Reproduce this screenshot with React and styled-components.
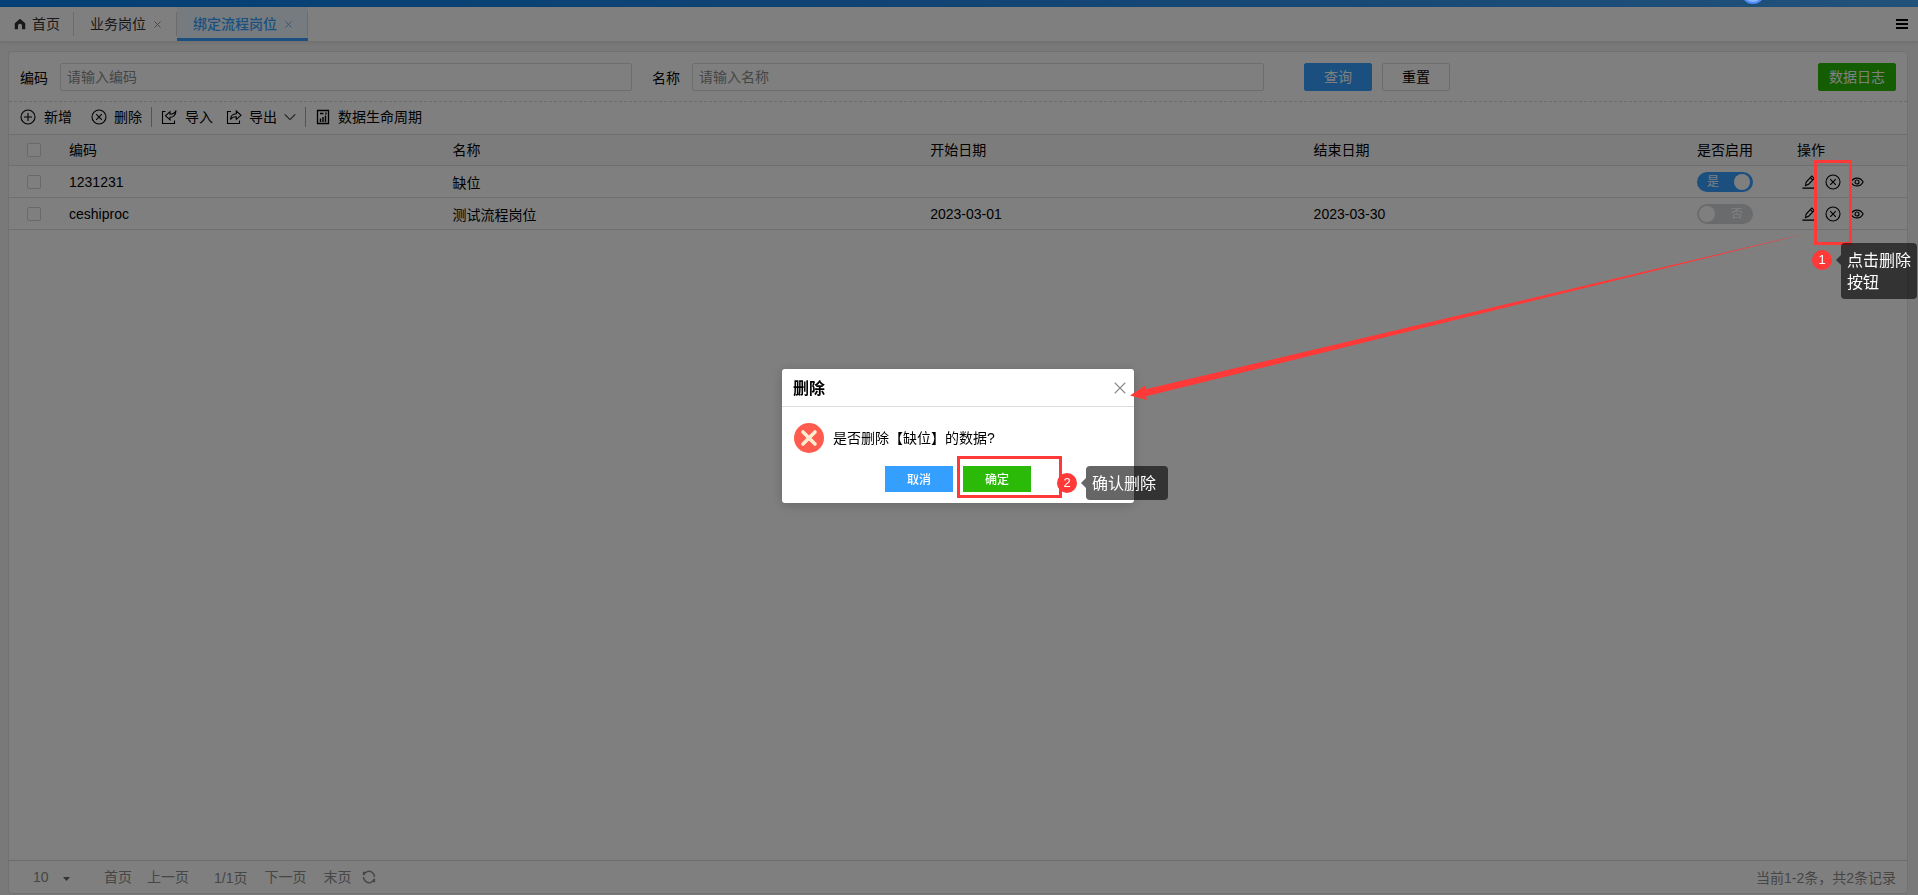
import React from "react";
import styled, { createGlobalStyle, css } from "styled-components";

const GlobalStyle = createGlobalStyle`
  * {
    box-sizing: border-box;
  }

  body {
    margin: 0;
    font-family: "Liberation Sans", "Noto Sans CJK SC", sans-serif;
    font-size: 14px;
    color: #000;
    background: #f2f2f2;
  }

  button, input, select {
    font-family: inherit;
    font-size: inherit;
    color: inherit;
    margin: 0;
  }
`;

const Page = styled.div`
  min-height: 100vh;
  display: flex;
  flex-direction: column;
`;

const TopBar = styled.div`
  height: 7px;
  background: linear-gradient(to right, #0880ea, #2488e8 50%, #44a4f4);
`;

const TabBar = styled.nav`
  height: 35px;
  display: flex;
  align-items: center;
  padding-left: 14px;
  background: #fff;
  border-bottom: 1px solid #e4e4e4;
  box-shadow: 0 1px 3px rgba(0, 0, 0, 0.08);
`;

const Tab = styled.div`
  height: 34px;
  display: flex;
  align-items: center;
  gap: 8px;
  padding: 0 16px;
  color: #333;
  position: relative;

  &:first-child {
    padding: 0 14px 0 0;
  }

  /* divider on the right edge of every tab */
  &::after {
    content: "";
    position: absolute;
    right: 0;
    top: 5px;
    width: 1px;
    height: 24px;
    background: #d8d8d8;
  }

  ${({ $active }) =>
    $active &&
    css`
      padding-top: 3px;
      color: #349fff;
      font-weight: 500;
      background: #ebf7ff;
      border-bottom: 3px solid #349fff;
    `}
`;

const TabLink = styled.a`
  display: flex;
  align-items: center;
  gap: 6px;
  line-height: 20px;
  color: inherit;
  text-decoration: none;
`;

const PlainButton = styled.button`
  display: inline-flex;
  align-items: center;
  gap: ${({ $gap }) => $gap || 0}px;
  padding: 0;
  border: 0;
  background: none;
  line-height: 20px;
  white-space: nowrap;
  cursor: pointer;
`;

const MenuButton = styled(PlainButton)`
  margin-left: auto;
  margin-right: 10px;
`;

const Panel = styled.main`
  flex: 1;
  display: flex;
  flex-direction: column;
  margin: 9px 10px 1px 8px;
  background: #fff;
  border: 1px solid #e2e2e2;
  border-radius: 4px;
`;

const SearchForm = styled.form`
  display: flex;
  align-items: center;
  padding: 11px 11px 10px;
  border-bottom: 1px dashed #d8d8d8;
`;

const Field = styled.label`
  flex: 1;
  display: flex;
  align-items: center;
  gap: 12px;
  margin-right: 20px;
  white-space: nowrap;
`;

const Input = styled.input`
  flex: 1;
  min-width: 0;
  height: 28px;
  padding: 0 6px 1px;
  border: 1px solid #d9dade;
  border-radius: 2px;
  background: #fff;

  &::placeholder {
    color: #8c8c8c;
  }
`;

const SearchActions = styled.div`
  flex: 0 0 612px;
  display: flex;
  gap: 10px;
  padding-left: 20px;
`;

const Button = styled.button`
  height: ${({ $small }) => ($small ? 26 : 28)}px;
  min-width: 68px;
  padding: 0 10px 2px;
  border: 1px solid ${({ $bg }) => $bg || "#d9d9d9"};
  border-radius: ${({ $small }) => ($small ? 0 : 2)}px;
  background: ${({ $bg }) => $bg || "#fff"};
  color: ${({ $bg }) => ($bg ? "#fff" : "#000")};
  font-size: ${({ $small }) => ($small ? 12 : 14)}px;
  font-weight: ${({ $small }) => ($small ? 500 : 400)};
  cursor: pointer;
`;

const LogButton = styled(Button)`
  margin-left: auto;
`;

const Toolbar = styled.div`
  height: 33px;
  display: flex;
  align-items: center;
  padding: 0 0 2px 11px;
  border-bottom: 1px solid #dedede;
`;

const ToolGroup = styled.div`
  display: flex;
  gap: ${({ $gap }) => $gap}px;
  padding-right: 9px;

  & + & {
    padding-left: 9px;
    border-left: 1px solid #a8a8a8;
  }
`;

const TableArea = styled.div`
  flex: 1;
`;

const Table = styled.table`
  width: 100%;
  table-layout: fixed;
  border-collapse: separate;
  border-spacing: 0;

  th, td {
    height: 32px;
    padding: 0 12px;
    border-bottom: 1px solid #dedede;
    text-align: left;
    font-weight: 400;
    white-space: nowrap;
  }

  th {
    height: 31px;
    padding-bottom: 2px;
    background: #f8f8f8;
  }

  th:first-child, td:first-child {
    padding: 0 0 0 18px;
  }
`;

const Col = styled.col`
  width: ${({ $width }) => $width || "auto"};
`;

const Checkbox = styled.input`
  appearance: none;
  display: block;
  width: 14px;
  height: 14px;
  margin: 0;
  border: 1px solid #d2d2d2;
  border-radius: 2px;
  background: #fff;
`;

const SwitchTrack = styled.label`
  display: flex;
  align-items: center;
  justify-content: space-between;
  flex-direction: ${({ $on }) => ($on ? "row" : "row-reverse")};
  width: 56px;
  height: 20px;
  margin-top: 1px;
  padding: ${({ $on }) => ($on ? "0 3px 0 10px" : "0 10px 0 2px")};
  border-radius: 10px;
  background: ${({ $on }) => ($on ? "#349fff" : "#d5d6da")};
  color: #fff;
  font-size: 12px;
  line-height: 20px;
`;

const SwitchInput = styled.input`
  appearance: none;
  width: 16px;
  height: 16px;
  margin: 0;
  border-radius: 50%;
  background: #fff;
`;

const RowActions = styled.div`
  display: flex;
  align-items: center;
  gap: 9px;
  padding-left: 5px;
`;

const Pager = styled.footer`
  height: 33px;
  display: flex;
  align-items: center;
  padding: 0 11px 1px 20px;
  border-top: 1px solid #d8d8d8;
  color: #8c8c8c;
`;

const PageSize = styled.label`
  display: flex;
  align-items: center;
  width: 60px;
  margin-right: 15px;

  select {
    appearance: none;
    width: 34px;
    padding: 0 0 0 4px;
    border: 0;
    background: none;
  }

  svg {
    pointer-events: none;
    margin-top: 5px;
  }
`;

const PagerLinks = styled.div`
  display: flex;
  align-items: center;
  gap: ${({ $gap }) => $gap}px;
  margin-right: ${({ $after }) => $after || 0}px;
`;

const Total = styled.span`
  margin-left: auto;
`;

const Mask = styled.div`
  position: fixed;
  inset: 0;
  display: flex;
  align-items: center;
  justify-content: center;
  padding: 0 2px 23px 0;
  background: rgba(0, 0, 0, 0.5);
`;

const Assistant = styled.svg`
  position: fixed;
  top: 0;
  right: 153px;
`;

const Dialog = styled.section`
  position: relative;
  width: 352px;
  background: #fff;
  border-radius: 3px;
  box-shadow: 0 2px 12px rgba(0, 0, 0, 0.2);
`;

const DialogHeader = styled.header`
  height: 38px;
  display: flex;
  align-items: center;
  justify-content: space-between;
  padding: 0 8px 0 11px;
  border-bottom: 1px solid #dcdde0;

  h2 {
    margin: 0;
    padding-bottom: 2px;
    font-size: 16px;
    font-weight: 700;
  }
`;

const DialogBody = styled.div`
  display: flex;
  align-items: center;
  gap: 9px;
  padding: 16px 12px 13px;

  p {
    margin: 0;
    line-height: 20px;
  }
`;

const DialogFooter = styled.footer`
  display: flex;
  gap: 10px;
  padding: 0 0 11px 103px;
`;

/* guide marks drawn over the page */
const Frame = styled.div`
  position: absolute;
  z-index: 2;
  top: ${({ $top }) => $top}px;
  left: ${({ $left }) => $left};
  right: ${({ $right }) => $right};
  width: ${({ $width }) => $width}px;
  height: ${({ $height }) => $height}px;
  border: 3px solid #ff3838;
  pointer-events: none;
`;

const Note = styled.div`
  position: absolute;
  z-index: 2;
  top: ${({ $top }) => $top}px;
  left: ${({ $left }) => $left};
  right: ${({ $right }) => $right};
  display: flex;
  align-items: flex-start;
  gap: 9px;
`;

const Badge = styled.span`
  width: 20px;
  height: 20px;
  margin-top: 7px;
  border-radius: 50%;
  background: #ff3838;
  color: #fff;
  font-size: 13px;
  line-height: 20px;
  text-align: center;
`;

const Tip = styled.span`
  position: relative;
  width: ${({ $width }) => $width}px;
  padding: 7px 6px 5px;
  border-radius: 4px;
  background: rgba(0, 0, 0, 0.6);
  color: #fff;
  font-size: 16px;
  line-height: 22px;

  &::before {
    content: "";
    position: absolute;
    left: -5px;
    top: 12px;
    border: 5px solid transparent;
    border-left: 0;
    border-right-color: rgba(0, 0, 0, 0.6);
  }
`;

const Arrow = styled.svg`
  position: absolute;
  z-index: 1;
  left: 348px;
  top: -136px;
  pointer-events: none;
`;

const Icon = ({ size = 16, children, ...rest }) => (
  <svg
    width={size}
    height={size}
    viewBox="0 0 16 16"
    fill="none"
    stroke="currentColor"
    strokeWidth="1.1"
    aria-hidden="true"
    {...rest}
  >
    {children}
  </svg>
);

const HomeIcon = () => (
  <Icon size={12}>
    <path d="M8 1 1 7v8h4.300v-4.500a2.700 2.700 0 0 1 5.400 0V15H15V7z" fill="currentColor" stroke="none" />
  </Icon>
);

const CloseIcon = ({ size = 7, color = "#888", weight = 2 }) => (
  <Icon size={size} stroke={color} strokeWidth={weight}>
    <path d="m1 1 14 14M15 1 1 15" />
  </Icon>
);

const PlusCircleIcon = () => (
  <Icon>
    <circle cx="8" cy="8" r="7" />
    <path d="M8 4v8M4 8h8" />
  </Icon>
);

const CrossCircleIcon = () => (
  <Icon>
    <circle cx="8" cy="8" r="7" />
    <path d="m5.200 5.200 5.600 5.600m0-5.600-5.600 5.600" />
  </Icon>
);

const ImportIcon = () => (
  <Icon>
    <path d="M4.500 2.500h-3v12h12v-3" />
    <path d="M15 1.500c-1 2.600-2.800 3.700-6 3.700V2.700L4.500 6.800 9 10.800V8.300c3.500 0 5.700-2.300 6-6.800z" />
  </Icon>
);

const ExportIcon = () => (
  <Icon>
    <path d="M5 2.500H1.500v12h12v-3" />
    <path d="M4.500 10.500c.3-4 2.500-5.600 5.800-5.700V2l4.700 4.300-4.700 4V7.800c-2.600 0-4.400.5-5.800 2.700z" />
  </Icon>
);

const ReportIcon = () => (
  <Icon>
    <path d="M2.500 1.500h11v13h-11z" strokeWidth="1.300" />
    <path d="M5.500 13V9.500M8 13V8M10.500 13V6.500M5 4.500h3.500M11 3.500v2" strokeWidth="1.400" />
  </Icon>
);

const ChevronIcon = () => (
  <Icon size={12} stroke="#333" strokeWidth="1.400">
    <path d="m1 4.500 7 7 7-7" />
  </Icon>
);

const EditIcon = () => (
  <Icon size={14} strokeWidth="1.300">
    <path d="M.5 15h15" strokeWidth="1.500" />
    <path d="m4 12 .8-4 6.400-6.700 2.800 2.600-6.400 6.600zM9.500 3l2.800 2.700" />
  </Icon>
);

const EyeIcon = () => (
  <Icon size={14} strokeWidth="1.300">
    <path d="M1 8C2.500 5 5 3.500 8 3.500S13.500 5 15 8c-1.500 3-4 4.500-7 4.500S2.500 11 1 8z" />
    <circle cx="8" cy="8" r="2.300" />
  </Icon>
);

const RefreshIcon = () => (
  <Icon size={14} strokeWidth="1.500">
    <path d="M5 2.200A6.400 6.400 0 0 1 14.300 8M11 13.800A6.400 6.400 0 0 1 1.700 8" />
    <path d="M1.700 6V2.700H5.500M14.300 10v3.300h-3.800M1.900 6l2-3M14.100 10l-2 3" />
  </Icon>
);

const rows = [
  { code: "1231231", name: "缺位", start: "", end: "", enabled: true },
  { code: "ceshiproc", name: "测试流程岗位", start: "2023-03-01", end: "2023-03-30", enabled: false },
];

const Switch = ({ on }) => (
  <SwitchTrack $on={on}>
    <span>{on ? "是" : "否"}</span>
    <SwitchInput type="checkbox" role="switch" defaultChecked={on} />
  </SwitchTrack>
);

const ConfirmDialog = () => (
  <Dialog role="dialog" aria-labelledby="dialog-title">
    <DialogHeader>
      <h2 id="dialog-title">删除</h2>
      <PlainButton type="button" aria-label="关闭">
        <CloseIcon size={12} color="#8a8a8a" weight={1.5} />
      </PlainButton>
    </DialogHeader>
    <DialogBody>
      <svg width="30" height="30" viewBox="0 0 30 30" aria-hidden="true">
        <circle cx="15" cy="15" r="15" fill="#ff5b4f" />
        <path d="m9 9 12 12M21 9 9 21" stroke="#ffedd2" strokeWidth="3.600" strokeLinecap="round" />
      </svg>
      <p>是否删除【缺位】的数据?</p>
    </DialogBody>
    <DialogFooter>
      <Button type="button" $small $bg="#349fff">取消</Button>
      <Button type="button" $small $bg="#2bba07">确定</Button>
    </DialogFooter>
    <Frame $top={87} $left="175px" $width={105} $height={42} />
    <Note $top={97} $left="275px">
      <Badge>2</Badge>
      <Tip $width={82}>确认删除</Tip>
    </Note>
    <Arrow width="680" height="170" viewBox="0 0 680 170" aria-hidden="true">
      <path d="M0 162.500 16 152l-.5 4.300L678 0 16 163.300l1 3.700z" fill="#ff3838" />
    </Arrow>
  </Dialog>
);

export default function App() {
  return (
    <>
      <GlobalStyle />
      <Page>
        <TopBar />
        <TabBar>
          <Tab>
            <TabLink href="#home">
              <HomeIcon />
              首页
            </TabLink>
          </Tab>
          <Tab>
            <TabLink href="#post">业务岗位</TabLink>
            <PlainButton type="button" aria-label="关闭业务岗位">
              <CloseIcon />
            </PlainButton>
          </Tab>
          <Tab $active>
            <TabLink href="#process">绑定流程岗位</TabLink>
            <PlainButton type="button" aria-label="关闭绑定流程岗位">
              <CloseIcon color="#6aa9e0" />
            </PlainButton>
          </Tab>
          <MenuButton type="button" aria-label="菜单">
            <svg width="12" height="10" viewBox="0 0 12 10" aria-hidden="true">
              <path d="M0 1h12M0 5h12M0 9h12" stroke="#000" strokeWidth="2" />
            </svg>
          </MenuButton>
        </TabBar>
        <Panel>
          <SearchForm>
            <Field>
              编码
              <Input type="text" placeholder="请输入编码" />
            </Field>
            <Field>
              名称
              <Input type="text" placeholder="请输入名称" />
            </Field>
            <SearchActions>
              <Button type="button" $bg="#349fff">查询</Button>
              <Button type="reset">重置</Button>
              <LogButton type="button" $bg="#2bba07">数据日志</LogButton>
            </SearchActions>
          </SearchForm>
          <Toolbar>
            <ToolGroup $gap={19}>
              <PlainButton type="button" $gap={8}><PlusCircleIcon />新增</PlainButton>
              <PlainButton type="button" $gap={7}><CrossCircleIcon />删除</PlainButton>
            </ToolGroup>
            <ToolGroup $gap={13}>
              <PlainButton type="button" $gap={8}><ImportIcon />导入</PlainButton>
              <PlainButton type="button" $gap={7}><ExportIcon />导出<ChevronIcon /></PlainButton>
            </ToolGroup>
            <ToolGroup>
              <PlainButton type="button" $gap={7}><ReportIcon />数据生命周期</PlainButton>
            </ToolGroup>
          </Toolbar>
          <TableArea>
            <Table>
              <colgroup>
                <Col $width="48px" />
                <Col $width="20.200%" />
                <Col />
                <Col $width="20.200%" />
                <Col $width="20.200%" />
                <Col $width="100px" />
                <Col $width="122px" />
              </colgroup>
              <thead>
                <tr>
                  <th><Checkbox type="checkbox" aria-label="全选" /></th>
                  <th>编码</th>
                  <th>名称</th>
                  <th>开始日期</th>
                  <th>结束日期</th>
                  <th>是否启用</th>
                  <th>操作</th>
                </tr>
              </thead>
              <tbody>
                {rows.map((row) => (
                  <tr key={row.code}>
                    <td><Checkbox type="checkbox" aria-label={row.code} /></td>
                    <td>{row.code}</td>
                    <td>{row.name}</td>
                    <td>{row.start}</td>
                    <td>{row.end}</td>
                    <td><Switch on={row.enabled} /></td>
                    <td>
                      <RowActions>
                        <PlainButton type="button" aria-label="编辑"><EditIcon /></PlainButton>
                        <PlainButton type="button" aria-label="删除"><CrossCircleIcon /></PlainButton>
                        <PlainButton type="button" aria-label="查看"><EyeIcon /></PlainButton>
                      </RowActions>
                    </td>
                  </tr>
                ))}
              </tbody>
            </Table>
          </TableArea>
          <Pager>
            <PageSize>
              <select aria-label="每页条数" defaultValue="10">
                <option>10</option>
                <option>20</option>
                <option>50</option>
              </select>
              <svg width="7" height="4" viewBox="0 0 7 4" aria-hidden="true">
                <path d="M0 0h7L3.500 4z" fill="#666" />
              </svg>
            </PageSize>
            <PagerLinks $gap={15} $after={25}>
              <PlainButton type="button">首页</PlainButton>
              <PlainButton type="button">上一页</PlainButton>
            </PagerLinks>
            <PagerLinks $gap={17} $after={11}>
              <span>1/1页</span>
              <PlainButton type="button">下一页</PlainButton>
              <PlainButton type="button">末页</PlainButton>
            </PagerLinks>
            <PlainButton type="button" aria-label="刷新"><RefreshIcon /></PlainButton>
            <Total>当前1-2条，共2条记录</Total>
          </Pager>
        </Panel>
      </Page>
      <Mask>
        <ConfirmDialog />
      </Mask>
      <Assistant width="24" height="5" viewBox="0 0 24 5" aria-hidden="true">
        <circle cx="12" cy="-8" r="11" fill="#8ab6ff" stroke="#4f8df5" strokeWidth="2" />
      </Assistant>
      <Frame $top={160} $right="66px" $width={38} $height={85} />
      <Note $top={243} $right="1px">
        <Badge>1</Badge>
        <Tip $width={76}>点击删除按钮</Tip>
      </Note>
    </>
  );
}
